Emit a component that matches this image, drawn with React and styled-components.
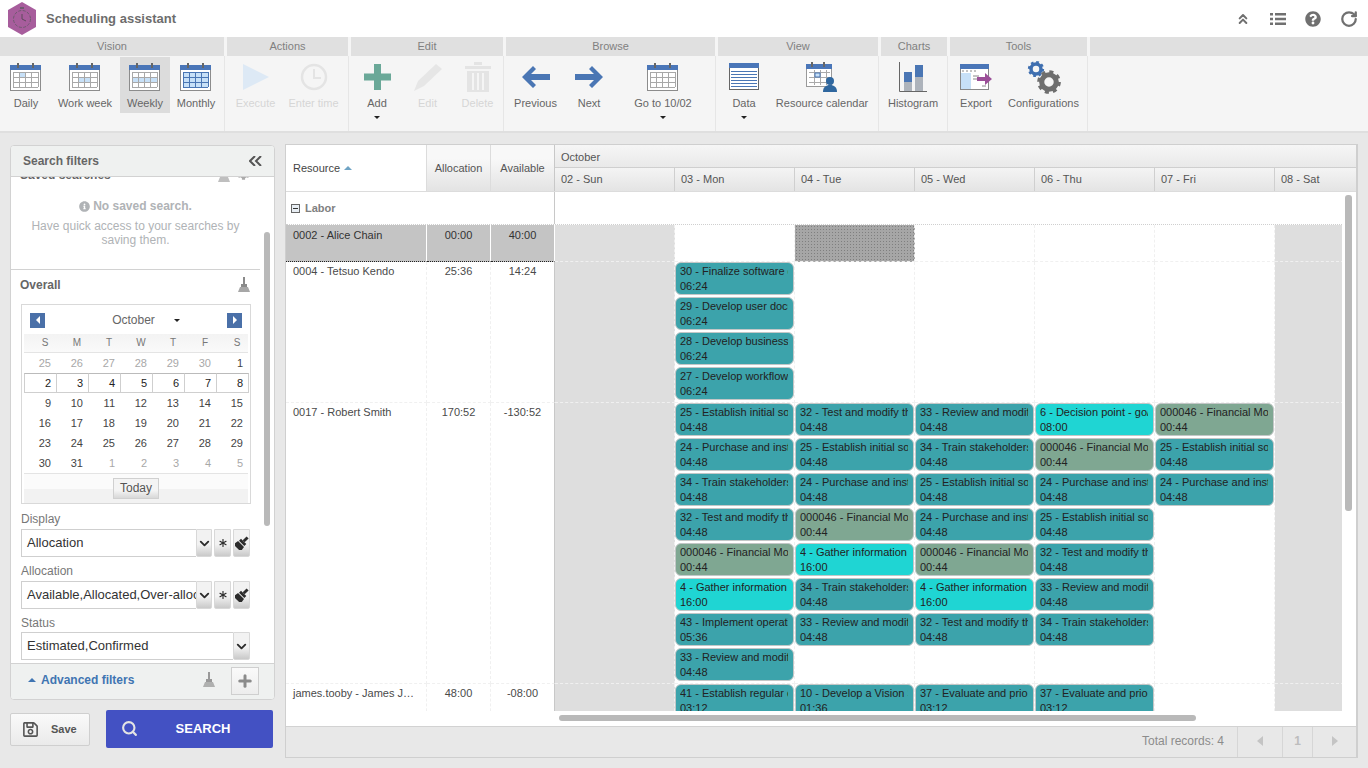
import React from "react";
import styled, { createGlobalStyle } from "styled-components";
import { ChevronsUp, RotateCw, ChevronDown, Search, Plus, Asterisk } from "lucide-react";
import { FaQuestionCircle, FaRegSave, FaInfoCircle, FaCog } from "react-icons/fa";

const GlobalStyle = createGlobalStyle`
  html, body { margin: 0; padding: 0; background: #e8e8e8; }
  body { font-family: "Liberation Sans", Arial, sans-serif; font-size: 11px; color: #333; }
  * { box-sizing: border-box; }
`;

const Page = styled.div`
  width: 1368px;
  height: 768px;
  overflow: hidden;
  display: flex;
  flex-direction: column;
`;

const Header = styled.header`
  height: 37px;
  background: #fff;
  display: flex;
  align-items: center;
  padding: 0 10px 0 8px;
`;

const Title = styled.h1`
  margin: 0 0 0 10px;
  font-size: 13px;
  font-weight: bold;
  color: #6d6d6d;
  flex: 1;
`;

const HeaderIcons = styled.div`
  display: flex;
  align-items: center;
  gap: 19px;
  color: #707070;
  svg { display: block; }
`;

const Toolbar = styled.div`
  height: 96px;
  display: flex;
  background: #f5f5f5;
  border-bottom: 2px solid #dfdfdf;
`;

const Group = styled.section`
  width: ${(p) => p.$w}px;
  display: flex;
  flex-direction: column;
  flex: ${(p) => (p.$fill ? 1 : "none")};
`;

const GroupHead = styled.div`
  height: 19px;
  margin-right: ${(p) => (p.$fill ? 0 : 3)}px;
  background: #e0e0e0;
  color: #808080;
  font-size: 11px;
  line-height: 19px;
  text-align: center;
`;

const GroupBody = styled.div`
  flex: 1;
  display: flex;
  margin-right: 2px;
  border-right: 1px solid #e6e6e6;
  padding-top: 1px;
`;

const Tool = styled.div`
  width: ${(p) => p.$w}px;
  height: 56px;
  display: flex;
  flex-direction: column;
  align-items: center;
  position: relative;
  padding-top: 4px;
  padding-right: ${(p) => p.$pr || 0}px;
  background: ${(p) => (p.$active ? "#dcdcdc" : "transparent")};
  color: ${(p) => (p.$off ? "#d6d6d6" : "#666")};
`;

const ToolIcon = styled.div`
  height: 32px;
  display: flex;
  align-items: center;
  justify-content: center;
  svg { display: block; flex: none; }
`;

const ToolLabel = styled.span`
  margin-top: 3px;
  font-size: 11px;
  line-height: 14px;
  white-space: nowrap;
`;

const Caret = styled.i`
  position: absolute;
  left: 50%;
  bottom: -6px;
  margin-left: -3px;
  border: 3px solid transparent;
  border-top: 3px solid #222;
  border-bottom: 0;
`;

const Main = styled.main`
  flex: 1;
  display: flex;
  gap: 10px;
  padding: 11px 10px 10px;
`;

const LeftCol = styled.div`
  width: 265px;
  margin-top: 1px;
  display: flex;
  flex-direction: column;
`;

const FilterPanel = styled.aside`
  height: 555px;
  background: #fff;
  border: 1px solid #d2d2d2;
  border-radius: 4px;
  display: flex;
  flex-direction: column;
  position: relative;
  overflow: hidden;
`;

const PanelHead = styled.div`
  height: 31px;
  background: #eff1f0;
  border-bottom: 1px solid #d2d2d2;
  display: flex;
  align-items: center;
  justify-content: space-between;
  padding: 0 12px 1px;
  font-size: 12px;
  font-weight: bold;
  color: #666;
  flex: none;
`;

const PanelBody = styled.div`
  flex: 1;
  overflow: hidden;
`;

const PanelScrollThumb = styled.div`
  position: absolute;
  left: 253px;
  top: 86px;
  width: 6px;
  height: 294px;
  border-radius: 3px;
  background: #b9b9b9;
`;

const SavedSection = styled.div`
  width: 249px;
  margin-top: -12px;
  padding-bottom: 22px;
  border-bottom: 1px solid #d2d2d2;
  text-align: center;
  color: #b0b3b6;
  font-size: 12px;
  line-height: 14px;
`;

const SectionRow = styled.div`
  height: ${(p) => (p.$h ? p.$h : 20)}px;
  display: flex;
  align-items: center;
  justify-content: space-between;
  gap: 8px;
  padding: 0 10px 0 9px;
  font-size: 12px;
  font-weight: bold;
  color: #666;
  width: 249px;
`;

const SavedIcons = styled.div`
  display: flex;
  gap: 7px;
  color: #aaa;
`;

const EmptyTitle = styled.div`
  margin: 14px 0 6px;
  font-weight: bold;
  display: flex;
  align-items: center;
  justify-content: center;
  gap: 3px;
`;

const Calendar = styled.div`
  width: 230px;
  margin: 4px 0 0 10px;
  border: 1px solid #d9d9d9;
  padding-left: 2px;
`;

const CalNav = styled.div`
  height: 29px;
  display: flex;
  align-items: center;
  padding: 1px 8px 0 6px;
  font-size: 12px;
  color: #666;
`;

const CalMonth = styled.div`
  flex: 1;
  display: flex;
  align-items: center;
  justify-content: center;
  gap: 19px;
  padding-left: 20px;
  i {
    border: 3px solid transparent;
    border-top: 3px solid #222;
    border-bottom: 0;
  }
`;

const CalArrow = styled.div`
  width: 15px;
  height: 15px;
  background: #4a70a8;
  display: flex;
  align-items: center;
  justify-content: center;
  i {
    border: 4px solid transparent;
    ${(p) => (p.$next ? "border-left: 4px solid #fff; border-right: 0;" : "border-right: 4px solid #fff; border-left: 0;")}
  }
`;

const CalGrid = styled.div`
  width: 224px;
  display: grid;
  grid-template-columns: repeat(7, 32px);
`;

const CalHead = styled(CalGrid)`
  height: 19px;
  background: linear-gradient(#f3f3f3, #fafafa);
  border-bottom: 1px solid #e4e4e4;
  color: #777;
  font-size: 10px;
  line-height: 18px;
  text-align: center;
  span { padding-left: 10px; }
`;

const CalDay = styled.div`
  height: 20px;
  line-height: 20px;
  text-align: right;
  padding-right: 5px;
  font-size: 11px;
  color: ${(p) => (p.$muted ? "#a8a8a8" : "#444")};
  ${(p) => (p.$week ? "border: 1px solid #cfcfcf; border-top-color: #bbb; line-height: 18px; margin-right: -1px; color: #222;" : "")}
`;

const CalFoot = styled.div`
  width: 224px;
  height: 30px;
  border-top: 1px solid #e4e4e4;
  background: linear-gradient(#fbfbfb 50%, #f2f2f2 50%);
  display: flex;
  justify-content: center;
  padding-top: 4px;
`;

const TodayBtn = styled.div`
  width: 46px;
  height: 21px;
  border: 1px solid #d0d0d0;
  background: linear-gradient(#f4f4f4 60%, #d8d8d8);
  font-size: 12px;
  line-height: 19px;
  text-align: center;
  color: #555;
`;

const FieldLabel = styled.div`
  margin: ${(p) => p.$top}px 0 0 10px;
  font-size: 12px;
  line-height: 14px;
  color: #777;
`;

const FieldRow = styled.div`
  display: flex;
  width: 229px;
  margin: ${(p) => p.$top || 3}px 0 0 10px;
  height: 28px;
`;

const FieldInput = styled.div`
  flex: 1;
  min-width: 0;
  border: 1px solid #cfcfcf;
  border-right: 0;
  padding-left: 5px;
  font-size: 13px;
  line-height: 26px;
  color: #333;
  white-space: nowrap;
  overflow: hidden;
`;

const FieldBtn = styled.div`
  width: ${(p) => p.$w || 17}px;
  margin-left: ${(p) => p.$gap || 0}px;
  flex: none;
  border: 1px solid #d8d8d8;
  border-radius: 0 0 2px 2px;
  background: linear-gradient(#f2f2f2 55%, #c9c9c9);
  display: flex;
  align-items: center;
  justify-content: center;
  color: #2c2c2c;
  svg { display: block; flex: none; }
`;

const PanelFoot = styled.div`
  height: 36px;
  flex: none;
  border-top: 1px solid #d2d2d2;
  background: #eff1f0;
  display: flex;
  align-items: center;
  padding: 0 15px 3px 17px;
`;

const AdvancedLink = styled.span`
  flex: 1;
  color: #3f75b2;
  font-size: 12px;
  font-weight: bold;
  display: flex;
  align-items: center;
  gap: 5px;
  i {
    border: 4px solid transparent;
    border-bottom: 4px solid #3f75b2;
    border-top: 0;
  }
`;

const AddFilterBtn = styled.div`
  width: 28px;
  height: 28px;
  margin: 2px 0 0 16px;
  border: 1px solid #cfcfcf;
  background: linear-gradient(#fafafa, #ededed);
  display: flex;
  align-items: center;
  justify-content: center;
  color: #8b8b8b;
`;

const ActionRow = styled.div`
  margin-top: 10px;
  height: 38px;
  display: flex;
  align-items: center;
  gap: 16px;
`;

const SaveBtn = styled.div`
  width: 80px;
  height: 33px;
  border: 1px solid #cfcfcf;
  border-radius: 2px;
  background: linear-gradient(#fafafa, #eaeaea);
  display: flex;
  align-items: center;
  gap: 12px;
  padding-left: 11px;
  font-size: 11px;
  font-weight: bold;
  color: #555;
`;

const SearchBtn = styled.div`
  width: 167px;
  height: 38px;
  border-radius: 2px;
  background: #4351c3;
  display: flex;
  align-items: center;
  padding: 0 0 2px 15px;
  color: #fff;
  font-size: 13px;
  font-weight: bold;
  span { flex: 1; text-align: center; padding-right: 5px; }
`;

const GridPanel = styled.div`
  width: 1073px;
  height: 614px;
  border: 1px solid #cfcfcf;
  border-width: 1px 2px 1px 1px;
  background: #fff;
  display: flex;
  flex-direction: column;
  position: relative;
`;

const HeadRow = styled.div`
  height: 47px;
  display: flex;
  flex: none;
  border-bottom: 1px solid #dcdcdc;
`;

const ResourceHead = styled.div`
  width: 140px;
  padding-left: 7px;
  display: flex;
  align-items: center;
  gap: 4px;
  color: #444;
  i {
    border: 4px solid transparent;
    border-bottom: 4px solid #6fa3c4;
    border-top: 0;
  }
`;

const ColHead = styled.div`
  width: 64px;
  border-left: 1px solid #dcdcdc;
  background: linear-gradient(#f8f8f8 30%, #e3e3e3);
  display: flex;
  align-items: center;
  justify-content: center;
  color: #555;
`;

const TimelineHead = styled.div`
  flex: 1;
  min-width: 0;
  overflow: hidden;
  border-left: 1px solid #c8c8c8;
`;

const MonthCell = styled.div`
  height: 23px;
  padding-left: 6px;
  line-height: 24px;
  color: #555;
  background: linear-gradient(#f6f6f6, #e9e9e9);
  border-bottom: 1px solid #cfcfcf;
`;

const DayHeads = styled.div`
  display: flex;
  height: 23px;
`;

const DayHead = styled.div`
  width: 120px;
  flex: none;
  padding-left: 6px;
  line-height: 23px;
  color: #555;
  background: linear-gradient(#f4f4f4, #e4e4e4);
  border-right: 1px solid #cfcfcf;
`;

const Viewport = styled.div`
  width: 1056px;
  height: 519px;
  overflow: hidden;
  flex: none;
`;

const GroupRow = styled.div`
  height: 33px;
  display: flex;
  border-bottom: 1px dotted #cfcfcf;
`;

const GroupLabel = styled.div`
  width: 269px;
  border-right: 1px solid #c8c8c8;
  padding-left: 5px;
  display: flex;
  align-items: center;
  gap: 5px;
  font-weight: bold;
  color: #808080;
`;

const MinusBox = styled.span`
  width: 9px;
  height: 9px;
  border: 1px solid #666;
  background: #e8eef4;
  display: flex;
  align-items: center;
  justify-content: center;
  &::after {
    content: "";
    width: 5px;
    height: 1px;
    background: #333;
  }
`;

const ResourceRow = styled.div`
  display: grid;
  grid-template-columns: 141px 64px 64px repeat(7, 120px);
  min-height: 37px;
`;

const TextCell = styled.div`
  padding: ${(p) => (p.$selected ? 4 : 3)}px ${(p) => (p.$name ? "10px 0 7px" : "0 0 0")};
  line-height: 13px;
  white-space: nowrap;
  overflow: hidden;
  text-overflow: ellipsis;
  text-align: ${(p) => (p.$name ? "left" : "center")};
  color: #4a4a4a;
  border-right: ${(p) => (p.$last ? "1px solid #c8c8c8" : "1px dashed #f0f0f0")};
  border-bottom: 1px dashed #f0f0f0;
  ${(p) => (p.$selected ? "background: #c4c4c4; color: #333; border-right: 1px solid #fff; border-bottom: 1px dotted #222;" : "")}
`;

const DayCell = styled.div`
  padding: 0 0 2px;
  display: flex;
  flex-direction: column;
  gap: 2px;
  border-right: 1px dashed #f0f0f0;
  border-bottom: 1px dashed #f0f0f0;
  background: ${(p) => (p.$off ? "#dedede" : "#fff")};
  ${(p) =>
    p.$busy
      ? "background-color: #a6a6a6; background-image: radial-gradient(#7f7f7f 0.6px, transparent 0.7px); background-size: 3px 3px;"
      : ""}
`;

const COLORS = { teal: "#3ca3ab", fin: "#7fa792", cyan: "#1fd5d3" };

const Task = styled.div`
  width: 119px;
  height: 33px;
  flex: none;
  border: 1px solid #c3c7c7;
  border-radius: 6px;
  background: ${(p) => COLORS[p.$kind]};
  padding: 1px 5px 0 4px;
  font-size: 11px;
  line-height: 15px;
  color: #222;
  overflow: hidden;
`;

const TaskTitle = styled.div`
  white-space: nowrap;
  overflow: hidden;
`;

const HBarTrack = styled.div`
  height: 15px;
  flex: none;
  padding: 4px 0 0 273px;
`;

const HBarThumb = styled.div`
  width: 637px;
  height: 6px;
  border-radius: 3px;
  background: #b9b9b9;
`;

const VBarThumb = styled.div`
  position: absolute;
  left: 1059px;
  top: 50px;
  width: 7px;
  height: 316px;
  border-radius: 3px;
  background: #b9b9b9;
`;

const GridFoot = styled.div`
  flex: 1;
  background: #e8e8e8;
  border-top: 1px solid #d2d2d2;
  display: flex;
  justify-content: flex-end;
  align-items: stretch;
  color: #8c8c8c;
  font-size: 12px;
`;

const TotalText = styled.div`
  padding-right: 13px;
  line-height: 28px;
`;

const PagerCell = styled.div`
  width: ${(p) => p.$w}px;
  border-left: 1px solid #d6d6d6;
  display: flex;
  align-items: center;
  justify-content: center;
  padding-bottom: 2px;
  color: #bdbdbd;
  font-weight: bold;
  i {
    border: 5px solid transparent;
    ${(p) => (p.$dir === "next" ? "border-left: 6px solid #c4c4c4; border-right: 0;" : "")}
    ${(p) => (p.$dir === "prev" ? "border-right: 6px solid #c4c4c4; border-left: 0;" : "")}
  }
`;

const Logo = () => (
  <svg width="28" height="33" viewBox="0 0 28 33">
    <polygon points="14,0 28,8 28,25 14,33 0,25 0,8" fill="#a75d9c" />
    <circle cx="14" cy="17" r="8.5" fill="none" stroke="#6f5a70" strokeWidth="1" strokeDasharray="3 1.5" />
    <path d="M14 12v5l4 2" fill="none" stroke="#5d4a5d" strokeWidth="1" />
    <rect x="12" y="5" width="4" height="2" fill="#6f5a70" />
  </svg>
);

const ListIcon = () => (
  <svg width="16" height="12" viewBox="0 0 16 12" fill="currentColor">
    <path d="M0 0h3v2.5H0zM5 0h11v2.5H5zM0 4.7h3v2.5H0zM5 4.7h11v2.5H5zM0 9.4h3v2.5H0zM5 9.4h11v2.5H5z" />
  </svg>
);

const CalendarIcon = ({ cells = [], strong }) => {
  const xs = [3, 9, 15, 21, 28];
  const ys = [9, 14, 19, 24];
  const w = strong ? "#4a76b4" : "#a8a8a8";
  return (
    <svg width="32" height="28" viewBox="0 0 32 28">
      <rect x="0.5" y="2.5" width="30" height="25" fill="#fff" stroke="#8c8c8c" />
      <rect x="0" y="2" width="31" height="5" fill="#4a76b8" />
      <rect x="7" y="0" width="2" height="5" fill="#666" />
      <rect x="22" y="0" width="2" height="5" fill="#666" />
      {cells.map(([c, r]) => (
        <rect key={c + "-" + r} x={xs[c]} y={ys[r]} width={xs[c + 1] - xs[c]} height="5" fill="#c7e0f7" />
      ))}
      {xs.map((x) => (
        <line key={x} x1={x + 0.5} x2={x + 0.5} y1="9" y2="24" stroke={w} />
      ))}
      {ys.map((y) => (
        <line key={y} x1="3" x2="28" y1={y + 0.5} y2={y + 0.5} stroke={w} />
      ))}
    </svg>
  );
};

const weekCells = [[0, 1], [1, 1], [2, 1], [3, 1]];
const monthCells = [0, 1, 2].flatMap((r) => [0, 1, 2, 3].map((c) => [c, r]));

// teeth are a dashed ring, 8 of them round the wheel
const Gear = ({ cx, cy, r, color }) => {
  const pitch = (2 * Math.PI * r * 1.35) / 8;
  return (
    <g>
      <circle cx={cx} cy={cy} r={r} fill="none" stroke={color} strokeWidth={r * 0.7} />
      <circle cx={cx} cy={cy} r={r * 1.35} fill="none" stroke={color} strokeWidth={r * 0.55} strokeDasharray={`${pitch / 2} ${pitch / 2}`} />
    </g>
  );
};

const Broom = ({ color = "#8a8a8a" }) => (
  <svg width="12" height="16" viewBox="0 0 12 16">
    <rect x="5" y="0" width="2" height="7" fill={color} />
    <rect x="3" y="7" width="6" height="3" fill={color} />
    <polygon points="2,10 10,10 12,15 0,15" fill={color} opacity="0.75" />
  </svg>
);

const Brush = () => (
  <svg width="14" height="14" viewBox="0 0 15 15">
    <g transform="rotate(45 7.5 7.5)" fill="#2c2c2c">
      <rect x="6" y="-1" width="3" height="6" />
      <rect x="3.5" y="5" width="8" height="3" />
      <polygon points="3,9 12,9 13,15 2,15" />
    </g>
  </svg>
);

const toolbar = [
  { name: "Vision", w: 227, tools: [
    { label: "Daily", w: 52, icon: <CalendarIcon cells={[[1, 0]]} /> },
    { label: "Work week", w: 68, pr: 2, icon: <CalendarIcon cells={[[1, 1], [2, 1]]} /> },
    { label: "Weekly", w: 50, active: true, icon: <CalendarIcon cells={weekCells} /> },
    { label: "Monthly", w: 52, icon: <CalendarIcon cells={monthCells} strong /> },
  ] },
  { name: "Actions", w: 124, tools: [
    { label: "Execute", w: 57, off: true, icon: <svg width="28" height="28" viewBox="0 0 28 28"><polygon points="1,1 27,14 1,27" fill="#dde9f5" /></svg> },
    { label: "Enter time", w: 61, pr: 2, off: true, icon: <svg width="28" height="28" viewBox="0 0 28 28"><circle cx="14" cy="14" r="12" fill="none" stroke="#e4e4e4" strokeWidth="2.5" /><path d="M14 6v9h7" fill="none" stroke="#e4e4e4" strokeWidth="2" /></svg> },
  ] },
  { name: "Edit", w: 155, tools: [
    { label: "Add", w: 52, menu: true, icon: <svg width="27" height="26" viewBox="0 0 27 26"><path d="M10 0h7v9.5h10v7H17V26h-7v-9.5H0v-7h10z" fill="#6aa898" /></svg> },
    { label: "Edit", w: 49, off: true, icon: <svg width="32" height="32" viewBox="0 0 32 32"><path d="M2 30l4-10L24 3l6 5-18 17z" fill="#e6e6e6" /></svg> },
    { label: "Delete", w: 51, off: true, icon: <svg width="28" height="32" viewBox="0 0 28 32"><path d="M1 5h26v3H1zM10 1h8v3h-8zM3 10h22v21H3z" fill="#e4e4e4" /><path d="M9 12v17M14 12v17M19 12v17" stroke="#f5f5f5" strokeWidth="2" /></svg> },
  ] },
  { name: "Browse", w: 212, tools: [
    { label: "Previous", w: 59, icon: <svg width="28" height="22" viewBox="0 0 28 22"><path d="M11 0l3 3-5 5h19v6H9l5 5-3 3L0 11z" fill="#4a76b4" /></svg> },
    { label: "Next", w: 48, icon: <svg width="28" height="22" viewBox="0 0 28 22"><path d="M17 0l-3 3 5 5H0v6h19l-5 5 3 3 11-11z" fill="#4a76b4" /></svg> },
    { label: "Go to 10/02", w: 100, menu: true, icon: <CalendarIcon /> },
  ] },
  { name: "View", w: 163, tools: [
    { label: "Data", w: 52, menu: true, icon: <svg width="30" height="28" viewBox="0 0 30 28"><rect x="0.5" y="0.5" width="29" height="26" fill="#fff" stroke="#666" /><rect width="30" height="5" fill="#4a76b8" /><path d="M2 8.5h26M2 11.5h26M2 14.5h26M2 17.5h26M2 20.5h26M2 23.5h26" stroke="#4a76b4" /></svg> },
    { label: "Resource calendar", w: 106, pr: 2, icon: <svg width="32" height="30" viewBox="0 0 32 30"><rect x="0.5" y="2.5" width="25" height="22" fill="#fff" stroke="#999" /><rect width="26" height="5" y="2" fill="#4a76b8" /><rect x="5" y="0" width="2" height="5" fill="#666" /><rect x="17" y="0" width="2" height="5" fill="#666" /><path d="M3 10.5h21M3 15.5h21M3 20.5h21M8.5 8v15M14.5 8v15M20.5 8v15" stroke="#aaa" /><rect x="9" y="11" width="5" height="4" fill="#c7e0f7" stroke="#4a76b4" /><circle cx="24" cy="19" r="4" fill="#2f679f" /><path d="M17 30c0-5 3-7 7-7s7 2 7 7z" fill="#2f679f" /></svg> },
  ] },
  { name: "Charts", w: 69, tools: [
    { label: "Histogram", w: 66, pr: 2, icon: <svg width="28" height="30" viewBox="0 0 28 30"><path d="M.5 0v29.5H28" fill="none" stroke="#666" /><rect x="5" y="10" width="8" height="10" fill="#4a76b4" /><rect x="5" y="20" width="8" height="9" fill="#adb3bb" /><rect x="16" y="3" width="8" height="12" fill="#4a76b4" /><rect x="16" y="15" width="8" height="14" fill="#adb3bb" /></svg> },
  ] },
  { name: "Tools", w: 140, tools: [
    { label: "Export", w: 52, icon: <svg width="32" height="28" viewBox="0 0 32 28"><rect x="0.5" y="1.5" width="28" height="25" fill="#fff" stroke="#888" /><rect y="1" width="29" height="5" fill="#4a76b8" /><rect x="1" y="10" width="10" height="16" fill="#c7e0f7" /><path d="M2 8h2M6 8h2M10 8h2M14 8h2M13 13h6M13 16h4M22 23h4" stroke="#888" /><path d="M17 14h8v-4l7 6-7 6v-4h-8z" fill="#9b4f98" /></svg> },
    { label: "Configurations", w: 83, icon: <svg width="34" height="34" viewBox="0 0 34 34"><Gear cx={9} cy={9} r={5} color="#3f6fb0" /><Gear cx={22} cy={22} r={7.3} color="#6e6e6e" /></svg> },
  ] },
];

const calRows = [
  [[25, 1], [26, 1], [27, 1], [28, 1], [29, 1], [30, 1], [1, 0]],
  [[2], [3], [4], [5], [6], [7], [8]],
  [[9], [10], [11], [12], [13], [14], [15]],
  [[16], [17], [18], [19], [20], [21], [22]],
  [[23], [24], [25], [26], [27], [28], [29]],
  [[30], [31], [1, 1], [2, 1], [3, 1], [4, 1], [5, 1]],
];

const T = {
  t25: ["25 - Establish initial software", "04:48", "teal"],
  t24: ["24 - Purchase and install tools", "04:48", "teal"],
  t34: ["34 - Train stakeholders on the tool", "04:48", "teal"],
  t32: ["32 - Test and modify the system", "04:48", "teal"],
  t33: ["33 - Review and modify the plan", "04:48", "teal"],
  fin: ["000046 - Financial Model review", "00:44", "fin"],
  t4: ["4 - Gather information from users", "16:00", "cyan"],
  t6: ["6 - Decision point - go/no-go", "08:00", "cyan"],
  t43: ["43 - Implement operating plan", "05:36", "teal"],
};

const rows = [
  { name: "0002 - Alice Chain", alloc: "00:00", avail: "40:00", selected: true, busy: 2, days: {} },
  { name: "0004 - Tetsuo Kendo", alloc: "25:36", avail: "14:24", days: {
    1: [
      ["30 - Finalize software documentation", "06:24", "teal"],
      ["29 - Develop user documentation", "06:24", "teal"],
      ["28 - Develop business rules", "06:24", "teal"],
      ["27 - Develop workflow models", "06:24", "teal"],
    ],
  } },
  { name: "0017 - Robert Smith", alloc: "170:52", avail: "-130:52", days: {
    1: [T.t25, T.t24, T.t34, T.t32, T.fin, T.t4, T.t43, T.t33],
    2: [T.t32, T.t25, T.t24, T.fin, T.t4, T.t34, T.t33],
    3: [T.t33, T.t34, T.t25, T.t24, T.fin, T.t4, T.t32],
    4: [T.t6, T.fin, T.t24, T.t25, T.t32, T.t33, T.t34],
    5: [T.fin, T.t25, T.t24],
  } },
  { name: "james.tooby - James J. Tooby", alloc: "48:00", avail: "-08:00", days: {
    1: [["41 - Establish regular data", "03:12", "teal"]],
    2: [["10 - Develop a Vision Statement", "01:36", "teal"]],
    3: [["37 - Evaluate and prioritize", "03:12", "teal"]],
    4: [["37 - Evaluate and prioritize", "03:12", "teal"]],
  } },
];

const dayNames = ["02 - Sun", "03 - Mon", "04 - Tue", "05 - Wed", "06 - Thu", "07 - Fri", "08 - Sat"];

export default function App() {
  return (
    <Page>
      <GlobalStyle />
      <Header>
        <Logo />
        <Title>Scheduling assistant</Title>
        <HeaderIcons>
          <ChevronsUp size={16} strokeWidth={3} />
          <ListIcon />
          <FaQuestionCircle size={16} />
          <RotateCw size={18} strokeWidth={3} />
        </HeaderIcons>
      </Header>

      <Toolbar>
        {toolbar.map((g) => (
          <Group key={g.name} $w={g.w}>
            <GroupHead>{g.name}</GroupHead>
            <GroupBody>
              {g.tools.map((t) => (
                <Tool key={t.label} $w={t.w} $pr={t.pr} $active={t.active} $off={t.off}>
                  <ToolIcon>{t.icon}</ToolIcon>
                  <ToolLabel>{t.label}</ToolLabel>
                  {t.menu && <Caret />}
                </Tool>
              ))}
            </GroupBody>
          </Group>
        ))}
        <Group $fill>
          <GroupHead $fill />
        </Group>
      </Toolbar>

      <Main>
        <LeftCol>
          <FilterPanel>
            <PanelHead>
              Search filters
              <svg width="13" height="10" viewBox="0 0 13 10">
                <path d="M6 0L1 5l5 5M12 0L7 5l5 5" fill="none" stroke="#555" strokeWidth="2" />
              </svg>
            </PanelHead>
            <PanelBody>
              <SavedSection>
                <SectionRow>
                  <span>Saved searches</span>
                  <SavedIcons>
                    <Broom color="#aaa" />
                    <FaCog size={13} />
                  </SavedIcons>
                </SectionRow>
                <EmptyTitle>
                  <FaInfoCircle size={11} />
                  No saved search.
                </EmptyTitle>
                Have quick access to your searches by
                <br />
                saving them.
              </SavedSection>
              <SectionRow $h={30}>
                Overall
                <Broom />
              </SectionRow>
              <Calendar>
                <CalNav>
                  <CalArrow><i /></CalArrow>
                  <CalMonth>October <i /></CalMonth>
                  <CalArrow $next><i /></CalArrow>
                </CalNav>
                <CalHead>
                  {["S", "M", "T", "W", "T", "F", "S"].map((d, i) => (
                    <span key={i}>{d}</span>
                  ))}
                </CalHead>
                {calRows.map((r, ri) => (
                  <CalGrid key={ri}>
                    {r.map(([d, muted]) => (
                      <CalDay key={d} $muted={muted} $week={ri === 1}>{d}</CalDay>
                    ))}
                  </CalGrid>
                ))}
                <CalFoot>
                  <TodayBtn>Today</TodayBtn>
                </CalFoot>
              </Calendar>
              <FieldLabel $top={8}>Display</FieldLabel>
              <FieldRow>
                <FieldInput>Allocation</FieldInput>
                <FieldBtn $w={16}><ChevronDown size={15} strokeWidth={3} /></FieldBtn>
                <FieldBtn $gap={2}><Asterisk size={14} strokeWidth={2} /></FieldBtn>
                <FieldBtn $gap={2}><Brush /></FieldBtn>
              </FieldRow>
              <FieldLabel $top={7}>Allocation</FieldLabel>
              <FieldRow>
                <FieldInput>Available,Allocated,Over-allocated</FieldInput>
                <FieldBtn $w={16}><ChevronDown size={15} strokeWidth={3} /></FieldBtn>
                <FieldBtn $gap={2}><Asterisk size={14} strokeWidth={2} /></FieldBtn>
                <FieldBtn $gap={2}><Brush /></FieldBtn>
              </FieldRow>
              <FieldLabel $top={7}>Status</FieldLabel>
              <FieldRow $top={2}>
                <FieldInput>Estimated,Confirmed</FieldInput>
                <FieldBtn><ChevronDown size={15} strokeWidth={3} /></FieldBtn>
              </FieldRow>
            </PanelBody>
            <PanelFoot>
              <AdvancedLink><i />Advanced filters</AdvancedLink>
              <Broom color="#999" />
              <AddFilterBtn><Plus size={18} strokeWidth={4} /></AddFilterBtn>
            </PanelFoot>
            <PanelScrollThumb />
          </FilterPanel>
          <ActionRow>
            <SaveBtn><FaRegSave size={17} color="#555" />Save</SaveBtn>
            <SearchBtn>
              <Search size={17} strokeWidth={3} color="#e4e4e4" />
              <span>SEARCH</span>
            </SearchBtn>
          </ActionRow>
        </LeftCol>

        <GridPanel>
          <HeadRow>
            <ResourceHead>Resource <i /></ResourceHead>
            <ColHead>Allocation</ColHead>
            <ColHead>Available</ColHead>
            <TimelineHead>
              <MonthCell>October</MonthCell>
              <DayHeads>
                {dayNames.map((d) => (
                  <DayHead key={d}>{d}</DayHead>
                ))}
              </DayHeads>
            </TimelineHead>
          </HeadRow>
          <Viewport>
            <GroupRow>
              <GroupLabel><MinusBox />Labor</GroupLabel>
            </GroupRow>
            {rows.map((r) => (
              <ResourceRow key={r.name}>
                <TextCell $name $selected={r.selected}>{r.name}</TextCell>
                <TextCell $selected={r.selected}>{r.alloc}</TextCell>
                <TextCell $last $selected={r.selected}>{r.avail}</TextCell>
                {dayNames.map((d, i) => (
                  <DayCell key={d} $off={i === 0 || i === 6} $busy={r.busy === i}>
                    {(r.days[i] || []).map(([title, time, kind], k) => (
                      <Task key={k} $kind={kind}>
                        <TaskTitle>{title}</TaskTitle>
                        {time}
                      </Task>
                    ))}
                  </DayCell>
                ))}
              </ResourceRow>
            ))}
          </Viewport>
          <HBarTrack><HBarThumb /></HBarTrack>
          <VBarThumb />
          <GridFoot>
            <TotalText>Total records: 4</TotalText>
            <PagerCell $w={45} $dir="prev"><i /></PagerCell>
            <PagerCell $w={30}>1</PagerCell>
            <PagerCell $w={44} $dir="next"><i /></PagerCell>
          </GridFoot>
        </GridPanel>
      </Main>
    </Page>
  );
}
